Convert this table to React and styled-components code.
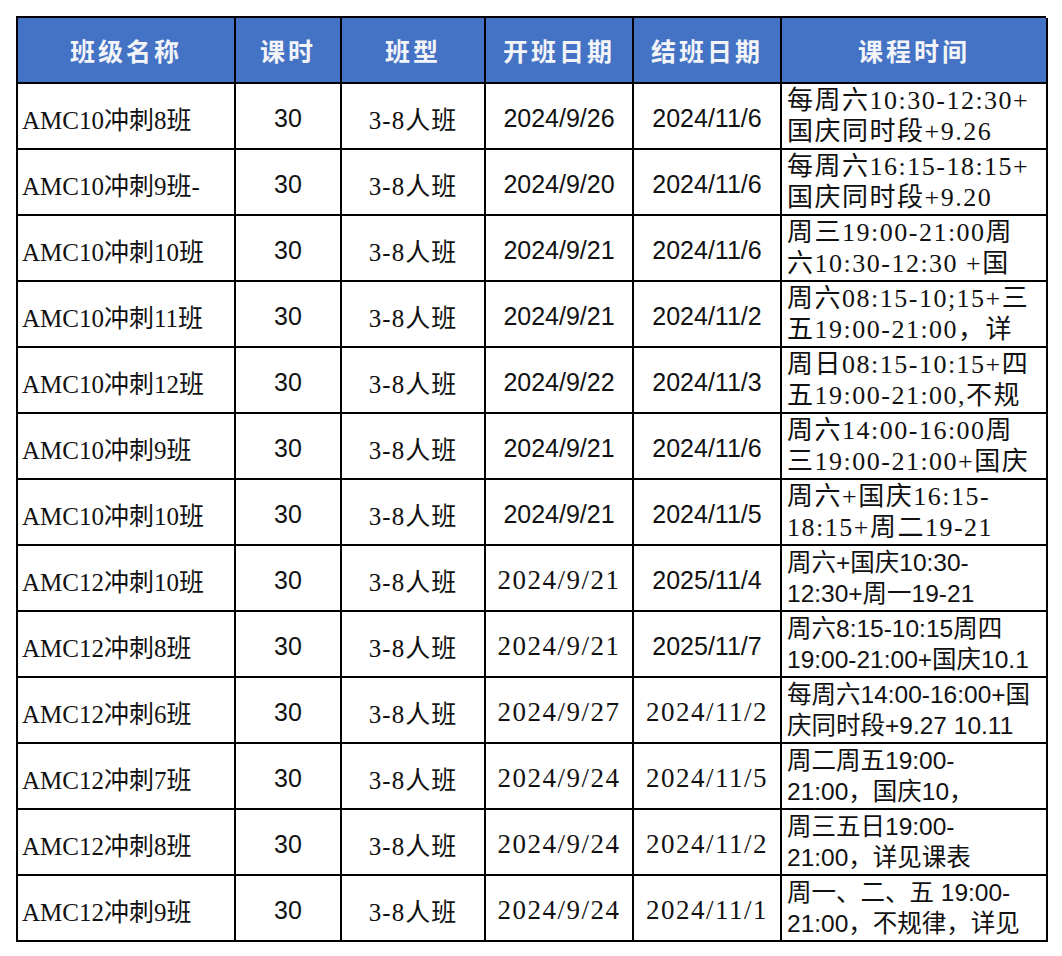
import styled, { createGlobalStyle } from "styled-components";

const GlobalStyle = createGlobalStyle`
  html, body {
    margin: 0;
    padding: 0;
    background: #ffffff;
  }
`;

const SERIF = `"Liberation Serif", "Noto Sans CJK SC", serif`;
const SANS = `"Liberation Sans", "Noto Sans CJK SC", sans-serif`;

const Page = styled.div`
  padding: 16px 0 0 16px;
  width: 1062px;
  height: 956px;
  box-sizing: border-box;
  overflow: hidden;
`;

const Grid = styled.div`
  display: grid;
  grid-template-columns: 218px 106px 144px 148px 148px 266px;
  grid-auto-rows: 66px;
  width: 1030px;
  box-sizing: border-box;
  border-left: 2px solid #000;
  border-top: 2px solid #000;
`;

const HeadCell = styled.div`
  display: flex;
  align-items: center;
  justify-content: center;
  background: #4472c4;
  color: #f2f4f8;
  font-family: "Noto Sans CJK SC", serif;
  font-weight: 700;
  font-size: 25px;
  letter-spacing: 3px;
  border-right: 2px solid #000;
  border-bottom: 2px solid #000;
  box-sizing: border-box;
`;

const Cell = styled.div`
  display: flex;
  align-items: center;
  justify-content: ${(p) => (p.$left ? "flex-start" : "center")};
  padding: ${(p) => (p.$left ? "4px 0 0 4px" : "4px 0 0 0")};
  font-family: ${(p) => (p.$sans ? SANS : SERIF)};
  font-size: ${(p) => p.$size || "25px"};
  letter-spacing: ${(p) => p.$spacing || "0"};
  color: #111;
  white-space: nowrap;
  overflow: hidden;
  border-right: 2px solid #000;
  border-bottom: 2px solid #000;
  box-sizing: border-box;
`;

const TimeCell = styled.div`
  display: flex;
  flex-direction: column;
  justify-content: center;
  padding: 0 0 0 5px;
  font-family: ${(p) => (p.$sans ? SANS : SERIF)};
  font-size: ${(p) => (p.$sans ? "24.5px" : "26px")};
  letter-spacing: ${(p) => (p.$sans ? "0" : "1.5px")};
  line-height: 31px;
  color: #111;
  white-space: nowrap;
  overflow: hidden;
  border-right: 2px solid #000;
  border-bottom: 2px solid #000;
  box-sizing: border-box;
`;

const headers = ["班级名称", "课时", "班型", "开班日期", "结班日期", "课程时间"];

const rows = [
  { name: "AMC10冲刺8班", start: "2024/9/26", end: "2024/11/6", time: ["每周六10:30-12:30+", "国庆同时段+9.26"] },
  { name: "AMC10冲刺9班-", start: "2024/9/20", end: "2024/11/6", time: ["每周六16:15-18:15+", "国庆同时段+9.20"] },
  { name: "AMC10冲刺10班", start: "2024/9/21", end: "2024/11/6", time: ["周三19:00-21:00周", "六10:30-12:30 +国"] },
  { name: "AMC10冲刺11班", start: "2024/9/21", end: "2024/11/2", time: ["周六08:15-10;15+三", "五19:00-21:00，详"] },
  { name: "AMC10冲刺12班", start: "2024/9/22", end: "2024/11/3", time: ["周日08:15-10:15+四", "五19:00-21:00,不规"] },
  { name: "AMC10冲刺9班", start: "2024/9/21", end: "2024/11/6", time: ["周六14:00-16:00周", "三19:00-21:00+国庆"] },
  { name: "AMC10冲刺10班", start: "2024/9/21", end: "2024/11/5", time: ["周六+国庆16:15-", "18:15+周二19-21"] },
  { name: "AMC12冲刺10班", start: "2024/9/21", startSerif: true, end: "2025/11/4", time: ["周六+国庆10:30-", "12:30+周一19-21"], timeSans: true },
  { name: "AMC12冲刺8班", start: "2024/9/21", startSerif: true, end: "2025/11/7", time: ["周六8:15-10:15周四", "19:00-21:00+国庆10.1"], timeSans: true },
  { name: "AMC12冲刺6班", start: "2024/9/27", startSerif: true, end: "2024/11/2", endSerif: true, time: ["每周六14:00-16:00+国", "庆同时段+9.27 10.11"], timeSans: true },
  { name: "AMC12冲刺7班", start: "2024/9/24", startSerif: true, end: "2024/11/5", endSerif: true, time: ["周二周五19:00-", "21:00，国庆10，"], timeSans: true },
  { name: "AMC12冲刺8班", start: "2024/9/24", startSerif: true, end: "2024/11/2", endSerif: true, time: ["周三五日19:00-", "21:00，详见课表"], timeSans: true },
  { name: "AMC12冲刺9班", start: "2024/9/24", startSerif: true, end: "2024/11/1", endSerif: true, time: ["周一、二、五 19:00-", "21:00，不规律，详见"], timeSans: true },
];

function DateCell({ value, serif }) {
  return serif ? (
    <Cell $size="27px" $spacing="1.5px">
      {value}
    </Cell>
  ) : (
    <Cell $sans>{value}</Cell>
  );
}

function Row({ r }) {
  return (
    <>
      <Cell $left>{r.name}</Cell>
      <Cell $sans>30</Cell>
      <Cell $spacing="1px">3-8人班</Cell>
      <DateCell value={r.start} serif={r.startSerif} />
      <DateCell value={r.end} serif={r.endSerif} />
      <TimeCell $sans={r.timeSans}>
        <span>{r.time[0]}</span>
        <span>{r.time[1]}</span>
      </TimeCell>
    </>
  );
}

export default function App() {
  return (
    <Page>
      <GlobalStyle />
      <Grid>
        {headers.map((h) => (
          <HeadCell key={h}>{h}</HeadCell>
        ))}
        {rows.map((r, i) => (
          <Row key={i} r={r} />
        ))}
      </Grid>
    </Page>
  );
}
